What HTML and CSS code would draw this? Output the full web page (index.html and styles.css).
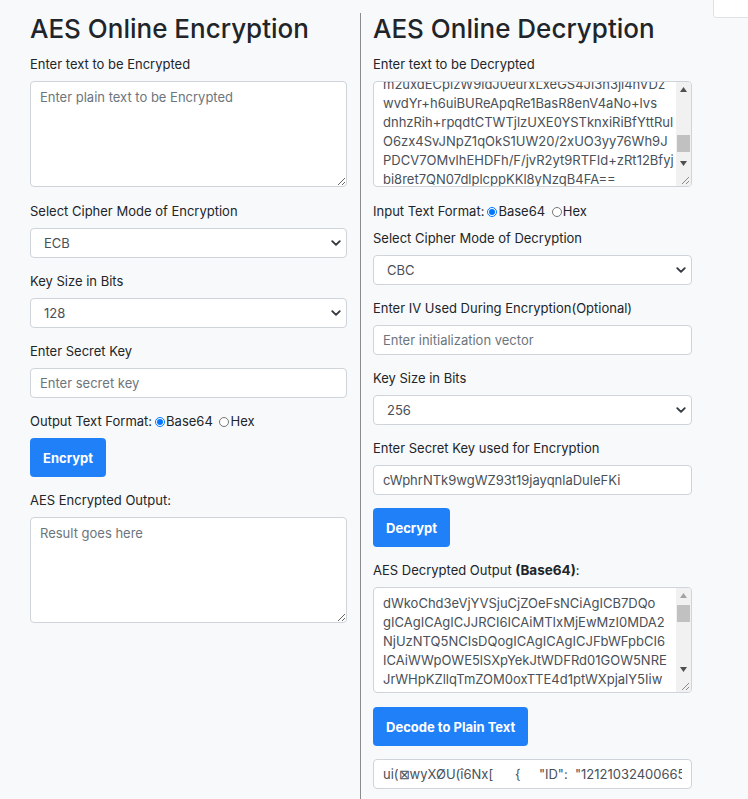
FILE: index.html
```html
<!DOCTYPE html>
<html lang="en">
<head>
<meta charset="utf-8">
<title>AES Online Encryption and Decryption</title>
<link rel="stylesheet" href="styles.css">
</head>
<body>
<div class="corner-box"></div>
<div class="page">
  <section class="col col-left">
    <h2 class="title">AES Online Encryption</h2>
    <div class="group group-ta">
      <label class="lbl">Enter text to be Encrypted</label>
      <textarea class="field area" placeholder="Enter plain text to be Encrypted"></textarea>
    </div>
    <div class="group">
      <label class="lbl">Select Cipher Mode of Encryption</label>
      <select class="field select"><option>ECB</option><option>CBC</option></select>
    </div>
    <div class="group">
      <label class="lbl">Key Size in Bits</label>
      <select class="field select"><option>128</option><option>192</option><option>256</option></select>
    </div>
    <div class="group">
      <label class="lbl">Enter Secret Key</label>
      <input class="field" type="text" placeholder="Enter secret key">
    </div>
    <div class="fmt">Output Text Format:<input type="radio" name="of" checked>Base64 <input type="radio" name="of">Hex</div>
    <button class="btn">Encrypt</button>
    <div class="group">
      <label class="lbl">AES Encrypted Output:</label>
      <textarea class="field area" placeholder="Result goes here"></textarea>
    </div>
  </section>
  <section class="col col-right">
    <h2 class="title">AES Online Decryption</h2>
    <div class="group group-ta">
      <label class="lbl">Enter text to be Decrypted</label>
      <div class="ta-wrap">
        <textarea id="cipher" class="field area scroll">U2FsdGVkX1+8Qk3vG2lYbq7nJp0aT4mR9cXs1Ew
Hn4Kq8P2zT6yV0uW3rA5bC7dE9fG1hJ2kL4mN6
pQ8sR0tU2vW4xY6zA8bC0dE2fG4hJ6kL8mN0pQ
2sR4tU6vW8xY0zA2bC4dE6fG8hJ0kL2mN4pQ6s
R8tU0vW2xY4zA6bC8dE0fG2hJ4kL6mN8pQ0sR2
tU4vW6xY8zA0bC2dE4fG6hJ8kL0mN2pQ4sR6tU
8vW0xY2zA4bC6dE8fG0hJ2kL4mN6pQ8sR0tU2v
W4xY6zA8bC0dE2fG4hJ6kL8mN0pQ2sR4tU6vW8
xY0zA2bC4dE6fG8hJ0kL2mN4pQ6sR8tU0vW2xY
4zA6bC8dE0fG2hJ4kL6mN8pQ0sR2tU4vW6xY8z
A0bC2dE4fG6hJ8kL0mN2pQ4sR6tU8vW0xY2zA4
bC6dE8fG0hJ2kL4mN6pQ8sR0tU2vW4xY6zA8bC
m2uxdECpizW9idJ0eurxLxeGS4Ji3n3ji4nVDz
wvdYr+h6uiBUReApqRe1BasR8enV4aNo+lvs
dnhzRih+rpqdtCTWTjlzUXE0YSTknxiRiBfYttRul
O6zx4SvJNpZ1qOkS1UW20/2xUO3yy76Wh9J
PDCV7OMvlhEHDFh/F/jvR2yt9RTFId+zRt12Bfyj
bi8ret7QN07dlplcppKKl8yNzqB4FA==</textarea>
        <div class="vbar" aria-hidden="true">
          <span class="vbar-btn"><svg width="7" height="5" viewBox="0 0 7 5"><path d="M3.5 0L7 5H0z" fill="#505050"/></svg></span>
          <span class="vbar-track"><span class="vbar-thumb thumb-end"></span></span>
          <span class="vbar-btn"><svg width="7" height="5" viewBox="0 0 7 5"><path d="M0 0h7L3.5 5z" fill="#505050"/></svg></span>
        </div>
        <span class="resizer" aria-hidden="true"><svg width="15" height="15" viewBox="0 0 15 15"><path d="M13 6L6 13M13 10L10 13" stroke="#8a8a8a" stroke-width="1"/></svg></span>
      </div>
    </div>
    <div class="fmt">Input Text Format:<input type="radio" name="if" checked>Base64 <input type="radio" name="if">Hex</div>
    <div class="group">
      <label class="lbl">Select Cipher Mode of Decryption</label>
      <select class="field select"><option>CBC</option><option>ECB</option></select>
    </div>
    <div class="group">
      <label class="lbl">Enter IV Used During Encryption(Optional)</label>
      <input class="field" type="text" placeholder="Enter initialization vector">
    </div>
    <div class="group">
      <label class="lbl">Key Size in Bits</label>
      <select class="field select"><option>256</option><option>128</option><option>192</option></select>
    </div>
    <div class="group">
      <label class="lbl">Enter Secret Key used for Encryption</label>
      <input class="field" type="text" value="cWphrNTk9wgWZ93t19jayqnlaDuleFKi">
    </div>
    <button class="btn">Decrypt</button>
    <div class="group group-ta">
      <label class="lbl">AES Decrypted Output <b class="hl">(Base64)</b>:</label>
      <div class="ta-wrap">
        <textarea class="field area scroll">dWkoChd3eVjYVSjuCjZOeFsNCiAgICB7DQo
gICAgICAgICJJRCI6ICAiMTIxMjEwMzI0MDA2
NjUzNTQ5NCIsDQogICAgICAgICJFbWFpbCI6
ICAiWWpOWE5lSXpYekJtWDFRd01GOW5NRE
JrWHpKZllqTmZOM0oxTTE4d1ptWXpjalY5Iiw
DQogICAgICAgICJQYXNzd29yZCI6ICAiUEB6
c3cwcmQxMjMiLA0KICAgICAgICAiTmFtZSI6
ICAiSm9obiBEb2UiLA0KICAgICAgICAiUm9s
ZSI6ICAiYWRtaW4iDQogICAgfSwNCiAgICB7
DQogICAgICAgICJJRCI6ICAiMTIxMjEwMzI0
MDA2NjUzNTQ5NSIsDQogICAgICAgICJFbWFp
bCI6ICAiYWxpY2VAZXhhbXBsZS5jb20iLA0K
ICAgICAgICAiUGFzc3dvcmQiOiAgInNlY3Jl
dDQ1NiIsDQogICAgICAgICJOYW1lIjogICJB
bGljZSBTbWl0aCIsDQogICAgICAgICJSb2xl
IjogICJ1c2VyIg0KICAgIH0NCl0NCg==
</textarea>
        <div class="vbar" aria-hidden="true">
          <span class="vbar-btn"><svg width="7" height="5" viewBox="0 0 7 5"><path d="M3.5 0L7 5H0z" fill="#a3a3a3"/></svg></span>
          <span class="vbar-track"><span class="vbar-thumb thumb-start"></span></span>
          <span class="vbar-btn"><svg width="7" height="5" viewBox="0 0 7 5"><path d="M0 0h7L3.5 5z" fill="#505050"/></svg></span>
        </div>
        <span class="resizer" aria-hidden="true"><svg width="15" height="15" viewBox="0 0 15 15"><path d="M13 6L6 13M13 10L10 13" stroke="#8a8a8a" stroke-width="1"/></svg></span>
      </div>
    </div>
    <button class="btn">Decode to Plain Text</button>
    <div class="group">
      <input class="field" type="text" value='ui(⊠wyXØU(î6Nx[      {     "ID":  "121210324006653549",'>
    </div>
  </section>
</div>
<script src="script.js"></script>
</body>
</html>
```
FILE: styles.css
```css
html, body {
  margin: 0;
  background: #f8f9fa;
}

body {
  font-family: "Inter", "Open Sans", sans-serif;
  font-size: 13px;
  line-height: 20px;
  color: #212529;
}

.corner-box {
  position: absolute;
  top: -1px;
  right: -1px;
  width: 34px;
  height: 17px;
  background: #fff;
  border: 1px solid #dee2e6;
  border-bottom-left-radius: 3px;
}

.page {
  display: flex;
  padding: 13px 0 0 17px;
}

.col {
  width: 344px;
  box-sizing: border-box;
  padding: 0 13px;
}

.col-left {
  border-right: 1px solid #8c8c8c;
}

.col-right {
  padding-left: 12px;
}

.title {
  margin: 0 0 10px;
  font-size: 26px;
  font-weight: 500;
  line-height: 31px;
  color: #212529;
}

.group {
  margin-bottom: 13px;
}

.group-ta {
  margin-bottom: 14px;
}

.lbl {
  display: block;
  margin-bottom: 7px;
}

.hl {
  font-size: 13.5px;
  font-weight: 700;
}

.field {
  display: block;
  width: 100%;
  box-sizing: border-box;
  height: 30px;
  margin: 0;
  padding: 0 9px;
  border: 1px solid #ced4da;
  border-radius: 4px;
  background: #fff;
  font-family: inherit;
  font-size: 13px;
  color: #495057;
  outline: none;
}

.field::placeholder {
  color: #6c757d;
}

.select {
  appearance: none;
  -webkit-appearance: none;
  padding-left: 13px;
  background-image: url("data:image/svg+xml,%3csvg xmlns='http://www.w3.org/2000/svg' viewBox='0 0 16 16'%3e%3cpath fill='none' stroke='%23343a40' stroke-linecap='round' stroke-linejoin='round' stroke-width='3' d='M2 5l6 6 6-6'/%3e%3c/svg%3e");
  background-repeat: no-repeat;
  background-position: right 5px center;
  background-size: 10px 10px;
}

.area {
  height: 106px;
  padding: 6px 9px;
  line-height: 19px;
  resize: vertical;
}

.scroll {
  padding-right: 24px;
  white-space: pre;
  overflow: hidden;
}

.ta-wrap {
  position: relative;
}

.vbar {
  position: absolute;
  top: 1px;
  right: 1px;
  bottom: 16px;
  width: 15px;
  display: flex;
  flex-direction: column;
  background: #f1f1f1;
  border-top-right-radius: 3px;
}

.vbar-btn {
  flex: none;
  height: 15px;
  display: flex;
  align-items: center;
  justify-content: center;
}

.vbar-track {
  flex: 1;
  position: relative;
}

.vbar-thumb {
  position: absolute;
  left: 1px;
  right: 1px;
  height: 17px;
  background: #c1c1c1;
}

.thumb-start {
  top: 2px;
}

.thumb-end {
  bottom: 4px;
}

.resizer {
  position: absolute;
  right: 1px;
  bottom: 1px;
  width: 15px;
  height: 15px;
  background: #f1f1f1;
  border-bottom-right-radius: 3px;
  line-height: 0;
}

.fmt {
  margin-bottom: 7px;
}

.fmt input {
  width: 10px;
  height: 10px;
  margin: 0 1px 0 3px;
  vertical-align: -1px;
}

.btn {
  display: block;
  height: 39px;
  margin: 0 0 13px;
  padding: 0 13px;
  border: 0;
  border-radius: 4px;
  background: #2080f8;
  color: #fff;
  font-family: inherit;
  font-size: 13px;
  font-weight: 700;
}
```
FILE: script.js
```js
var c = document.getElementById('cipher');
c.scrollTop = c.scrollHeight - c.clientHeight - 9;
```
